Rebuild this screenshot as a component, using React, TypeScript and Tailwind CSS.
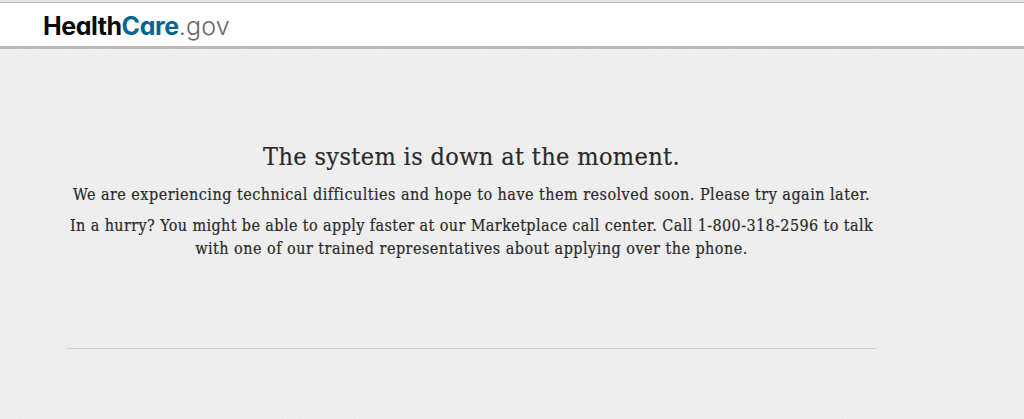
interface Line {
  text: string;
  className: string;
}

const lines: Line[] = [
  {
    text: "We are experiencing technical difficulties and hope to have them resolved soon. Please try again later.",
    className: "tracking-[0.475px]",
  },
  {
    text: "In a hurry? You might be able to apply faster at our Marketplace call center. Call 1-800-318-2596 to talk",
    className: "mt-2 tracking-[0.4px]",
  },
  {
    text: "with one of our trained representatives about applying over the phone.",
    className: "tracking-[0.475px]",
  },
];

function Logo() {
  return (
    <a
      href="#"
      className="flex items-baseline pt-[2px] font-['Inter',sans-serif] text-[25px] leading-[30px] whitespace-nowrap [font-feature-settings:'cv11']"
    >
      <span className="font-bold tracking-[-0.45px] text-[#0b0b0b]">Health</span>
      <span className="font-bold tracking-[-0.4px] text-[#046791]">Care</span>
      <span className="font-light tracking-[0.2px] text-[#666666]">.gov</span>
    </a>
  );
}

export default function App() {
  return (
    <div className="h-[419px] overflow-hidden bg-[#efefef] bg-[repeating-linear-gradient(45deg,transparent_0_2px,rgba(0,0,0,0.012)_2px_3px)]">
      <div className="h-[2px] bg-[#e6e6e6]" />
      <header className="flex h-[47px] items-center border-t border-b-3 border-t-[#bdbdbd] border-b-[#bcbcbc] bg-white pl-[43px]">
        <Logo />
      </header>

      <main className="ml-[67px] h-[300px] w-[809px] border-b border-[#cfcfcf] pt-[90px] text-center font-['DejaVu_Serif_Condensed','DejaVu_Serif',serif] text-[#2b2b2b] [font-stretch:condensed] [-webkit-text-stroke:0.2px_#2b2b2b]">
        <h1 className="text-[25px] leading-9 tracking-[0.36px] whitespace-nowrap">
          The system is down at the moment.
        </h1>
        <div className="mt-2 text-[16px] leading-[23px]">
          {lines.map((line) => (
            <p key={line.text} className={`whitespace-nowrap ${line.className}`}>
              {line.text}
            </p>
          ))}
        </div>
      </main>
    </div>
  );
}
